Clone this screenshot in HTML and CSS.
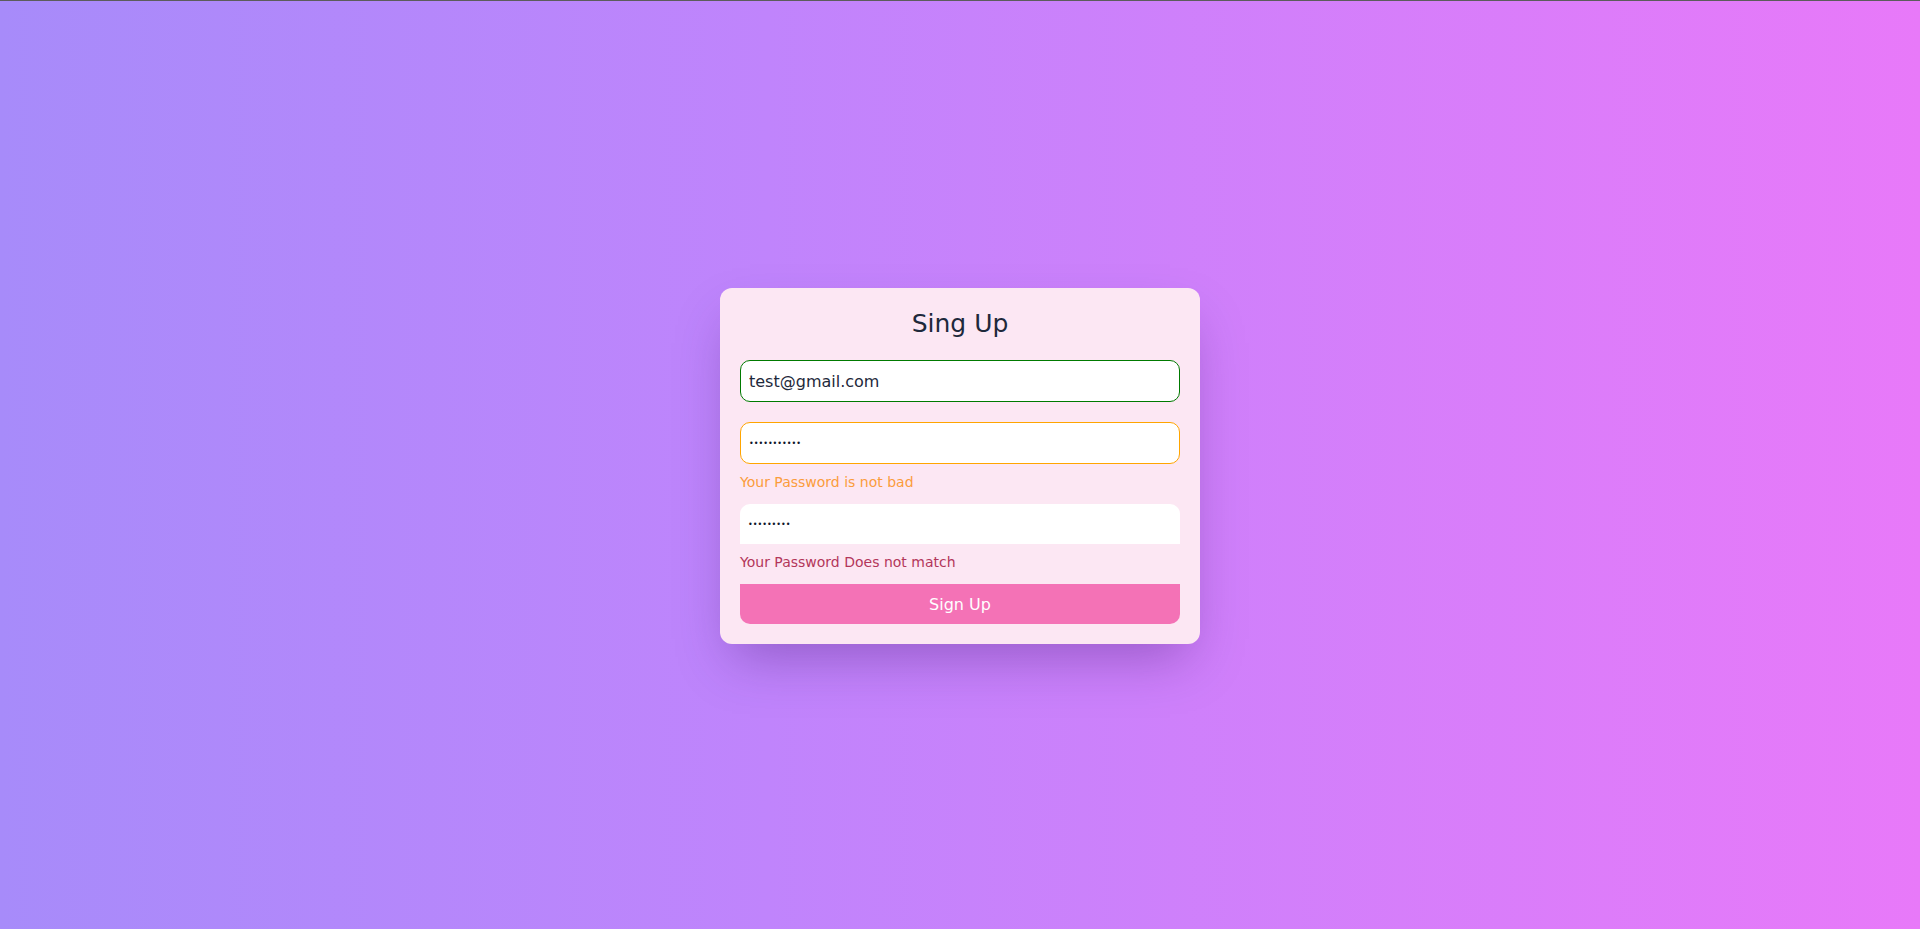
FILE: index.html
```html
<!DOCTYPE html>
<html lang="en">
<head>
<meta charset="utf-8">
<title>Sing Up</title>
<link rel="stylesheet" href="styles.css">
</head>
<body>
<main class="page">
  <form class="card">
    <h1 class="title">Sing Up</h1>
    <input class="field field-ok" type="email" value="test@gmail.com">
    <input class="field field-warn field-secret" type="password" value="12345678901">
    <p class="msg msg-warn">Your Password is not bad</p>
    <input class="field field-plain field-secret" type="password" value="123456789">
    <p class="msg msg-err">Your Password Does not match</p>
    <button class="btn" type="button">Sign Up</button>
  </form>
</main>
</body>
</html>
```

FILE: styles.css
```css
* { box-sizing: border-box; }
html, body { margin: 0; height: 100%; }
body {
  border-top: 1px solid #5c5c5c;
  font-family: "DejaVu Sans", sans-serif;
  background: linear-gradient(to right, #a78bfa, #c084fc 40%, #e879f9);
}
.page {
  height: 928px;
  padding-top: 2px;
  display: flex;
  align-items: center;
  justify-content: center;
}
.card {
  width: 480px;
  background: #fce7f3;
  border-radius: 12px;
  padding: 20px;
  display: flex;
  flex-direction: column;
  box-shadow: 0 25px 50px -12px rgba(60, 20, 110, 0.35);
}
.title {
  margin: 0;
  font-size: 25px;
  line-height: 32px;
  font-weight: 400;
  text-align: center;
  color: #1e293b;
}
.field {
  width: 100%;
  height: 42px;
  border-radius: 10px;
  padding: 0 8px;
  font-family: "DejaVu Sans", sans-serif;
  font-size: 16px;
  color: #1e293b;
  background: #fff;
  outline: none;
}
.field-secret {
  font-size: 8px;
  color: #0f172a;
}
.field-ok { margin-top: 20px; border: 1px solid #007a00; }
.field-warn { margin-top: 20px; border: 1px solid #ffa500; }
.field-plain {
  margin-top: 12px;
  height: 40px;
  border: 0;
  border-radius: 10px 10px 0 0;
}
.msg {
  margin: 8px 0 0;
  font-size: 14px;
  line-height: 20px;
}
.msg-warn { color: #fb9c3c; }
.msg-err { color: #b3365a; }
.btn {
  margin-top: 12px;
  height: 40px;
  border: 0;
  border-radius: 0 0 10px 10px;
  background: #f472b6;
  color: #fff;
  font-family: "DejaVu Sans", sans-serif;
  font-size: 16px;
}
```
